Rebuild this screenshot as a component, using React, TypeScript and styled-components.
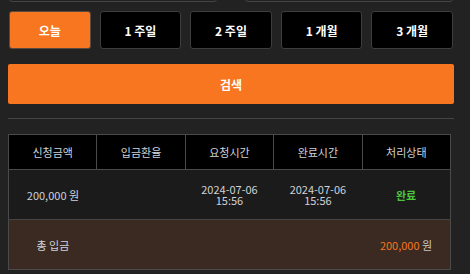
import React from "react";
import styled, { createGlobalStyle } from "styled-components";

const Global = createGlobalStyle`
  html, body { margin: 0; padding: 0; background: #222222; }
  body { font-family: "Noto Sans CJK KR", "Noto Sans", sans-serif; overflow: hidden; }
  * { box-sizing: border-box; }
`;

const Page = styled.div`
  width: 470px;
  height: 274px;
  padding: 0 16px 0 8px;
  display: flex;
  flex-direction: column;
`;

const DateRow = styled.div`
  margin-top: -28px;
  padding: 0 1px;
  display: grid;
  grid-template-columns: 208px 208px;
  justify-content: space-between;
`;

const DateBox = styled.div`
  height: 30px;
  border: 1px solid #444;
  border-radius: 3px;
  background: #222;
`;

const PeriodRow = styled.div`
  margin-top: 9px;
  padding: 0 1px;
  display: grid;
  grid-template-columns: repeat(5, 1fr);
  gap: 9px;
`;

const PeriodButton = styled.button<{ $active?: boolean }>`
  height: 38px;
  border: 1px solid ${(p) => (p.$active ? "#5a4a40" : "#3d3d3d")};
  border-radius: 3px;
  background: ${(p) => (p.$active ? "#f7761f" : "#000")};
  color: #fff;
  font-family: "Noto Sans CJK KR", sans-serif;
  font-weight: 700;
  font-size: 12px;
  padding: 0;
`;

const SearchButton = styled.button`
  margin-top: 15px;
  height: 40px;
  border: none;
  border-radius: 2px;
  background: #f7761f;
  color: #fff;
  font-family: "Noto Sans CJK KR", sans-serif;
  font-weight: 700;
  font-size: 12px;
`;

const Divider = styled.div`
  margin-top: 14px;
  height: 1px;
  background: #444;
`;

const Table = styled.table`
  margin-top: 15px;
  width: 443px;
  border-collapse: collapse;
  table-layout: fixed;
  border: 1px solid #4a4a4a;
  font-size: 11px;
  color: #cfd2d8;
`;

const Th = styled.th`
  height: 35px;
  background: #000;
  border: 1px solid #4a4a4a;
  font-weight: 400;
  font-size: 11px;
  color: #cfd2d8;
  padding: 0;
`;

const DataRow = styled.tr`
  background: #1b1b1b;
  height: 50px;
  border-bottom: 1px solid #444;
`;

const TotalRow = styled.tr`
  background: #3a2a22;
  height: 50px;
`;

const Td = styled.td`
  text-align: center;
  padding: 0;
  vertical-align: middle;
`;

const DateText = styled.div`
  line-height: 11px;
`;

const Done = styled.span`
  color: #4cc43c;
  font-weight: 700;
`;

const Amount = styled.span`
  color: #f7761f;
`;

const Unit = styled.span`
  color: #c8c8c8;
`;

const periods = ["오늘", "1 주일", "2 주일", "1 개월", "3 개월"];
const headers = ["신청금액", "입금환율", "요청시간", "완료시간", "처리상태"];

export default function App() {
  return (
    <>
      <Global />
      <Page>
        <DateRow>
          <DateBox />
          <DateBox />
        </DateRow>
        <PeriodRow>
          {periods.map((p, i) => (
            <PeriodButton key={p} $active={i === 0}>
              {p}
            </PeriodButton>
          ))}
        </PeriodRow>
        <SearchButton>검색</SearchButton>
        <Divider />
        <Table>
          <thead>
            <tr>
              {headers.map((h) => (
                <Th key={h}>{h}</Th>
              ))}
            </tr>
          </thead>
          <tbody>
            <DataRow>
              <Td>200,000 원</Td>
              <Td></Td>
              <Td>
                <DateText>
                  2024-07-06
                  <br />
                  15:56
                </DateText>
              </Td>
              <Td>
                <DateText>
                  2024-07-06
                  <br />
                  15:56
                </DateText>
              </Td>
              <Td>
                <Done>완료</Done>
              </Td>
            </DataRow>
            <TotalRow>
              <Td>총 입금</Td>
              <Td></Td>
              <Td></Td>
              <Td></Td>
              <Td>
                <Amount>200,000</Amount> <Unit>원</Unit>
              </Td>
            </TotalRow>
          </tbody>
        </Table>
      </Page>
    </>
  );
}
